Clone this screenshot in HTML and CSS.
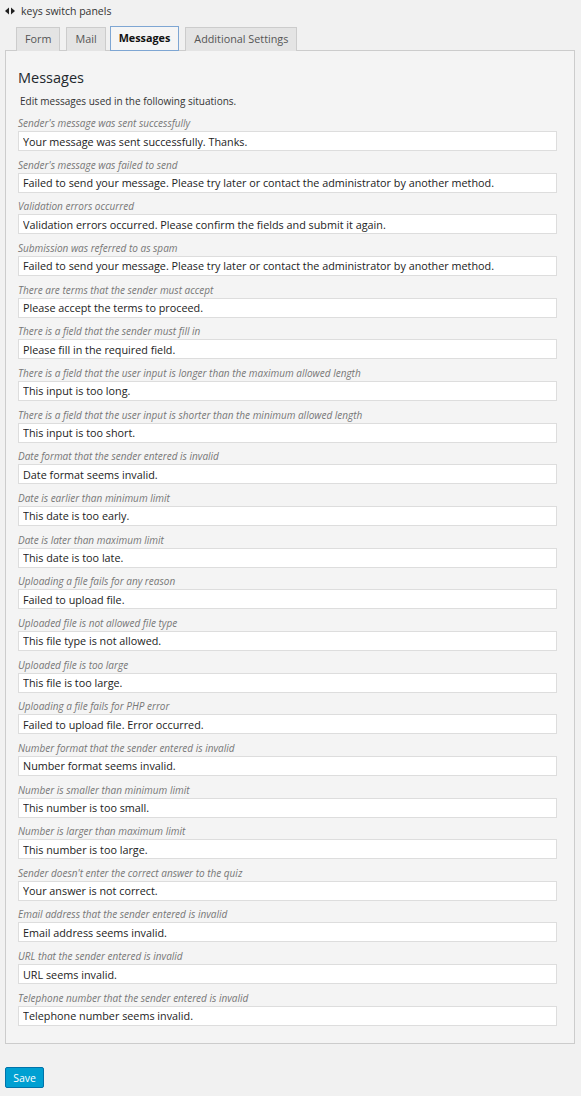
FILE: index.html
```html
<!DOCTYPE html>
<html lang="en">
<head>
  <meta charset="UTF-8">
  <title>Contact Form - Messages</title>
  <link rel="stylesheet" href="styles.css">
</head>
<body>

  <!-- Keyboard hint -->
  <p class="keys-hint">
    <svg class="keys-icon" width="10" height="8" viewBox="0 0 10 8"><polygon points="0,4 4,0.5 4,7.5" fill="#222"/><polygon points="10,4 6,0.5 6,7.5" fill="#222"/></svg>
    keys switch panels
  </p>

  <!-- Tabs -->
  <nav class="tabs">
    <a href="#form" class="tab">Form</a>
    <a href="#mail" class="tab">Mail</a>
    <a href="#messages" class="tab active">Messages</a>
    <a href="#additional" class="tab">Additional Settings</a>
  </nav>

  <!-- Messages panel -->
  <section class="panel" id="messages">
    <h2>Messages</h2>
    <p class="desc">Edit messages used in the following situations.</p>

    <label class="field"><span>Sender's message was sent successfully</span><input type="text" value="Your message was sent successfully. Thanks."></label>
    <label class="field"><span>Sender's message was failed to send</span><input type="text" value="Failed to send your message. Please try later or contact the administrator by another method."></label>
    <label class="field"><span>Validation errors occurred</span><input type="text" value="Validation errors occurred. Please confirm the fields and submit it again."></label>
    <label class="field"><span>Submission was referred to as spam</span><input type="text" value="Failed to send your message. Please try later or contact the administrator by another method."></label>
    <label class="field"><span>There are terms that the sender must accept</span><input type="text" value="Please accept the terms to proceed."></label>
    <label class="field"><span>There is a field that the sender must fill in</span><input type="text" value="Please fill in the required field."></label>
    <label class="field"><span>There is a field that the user input is longer than the maximum allowed length</span><input type="text" value="This input is too long."></label>
    <label class="field"><span>There is a field that the user input is shorter than the minimum allowed length</span><input type="text" value="This input is too short."></label>
    <label class="field"><span>Date format that the sender entered is invalid</span><input type="text" value="Date format seems invalid."></label>
    <label class="field"><span>Date is earlier than minimum limit</span><input type="text" value="This date is too early."></label>
    <label class="field"><span>Date is later than maximum limit</span><input type="text" value="This date is too late."></label>
    <label class="field"><span>Uploading a file fails for any reason</span><input type="text" value="Failed to upload file."></label>
    <label class="field"><span>Uploaded file is not allowed file type</span><input type="text" value="This file type is not allowed."></label>
    <label class="field"><span>Uploaded file is too large</span><input type="text" value="This file is too large."></label>
    <label class="field"><span>Uploading a file fails for PHP error</span><input type="text" value="Failed to upload file. Error occurred."></label>
    <label class="field"><span>Number format that the sender entered is invalid</span><input type="text" value="Number format seems invalid."></label>
    <label class="field"><span>Number is smaller than minimum limit</span><input type="text" value="This number is too small."></label>
    <label class="field"><span>Number is larger than maximum limit</span><input type="text" value="This number is too large."></label>
    <label class="field"><span>Sender doesn't enter the correct answer to the quiz</span><input type="text" value="Your answer is not correct."></label>
    <label class="field"><span>Email address that the sender entered is invalid</span><input type="text" value="Email address seems invalid."></label>
    <label class="field"><span>URL that the sender entered is invalid</span><input type="text" value="URL seems invalid."></label>
    <label class="field"><span>Telephone number that the sender entered is invalid</span><input type="text" value="Telephone number seems invalid."></label>
  </section>

  <button type="button" class="save">Save</button>

</body>
</html>
```

FILE: styles.css
```css
body {
  background-color: #f1f1f1;
  font-family: "Open Sans", Arial, sans-serif;
  color: #333;
  margin: 0;
  padding: 0 6px 0 5px;
}
.keys-hint {
  margin: 0;
  height: 22px;
  font-size: 10.5px;
  color: #333;
  display: flex;
  align-items: center;
  gap: 6px;
}
.tabs {
  display: flex;
  gap: 6px;
  padding-left: 11px;
  height: 23px;
  margin-top: 5px;
}
.tab {
  display: block;
  box-sizing: border-box;
  height: 24px;
  line-height: 22px;
  padding: 0 8px;
  font-size: 10.8px;
  color: #555;
  text-decoration: none;
  background-color: #e4e4e4;
  border: 1px solid #ccc;
  border-bottom: none;
}
.tab.active {
  background-color: #f5f5f5;
  color: #111;
  font-weight: bold;
  border: 1px solid #7ea6d3;
  height: 25px;
  margin-top: -1px;
  margin-left: -2px;
  position: relative;
}
.panel {
  background-color: #f4f4f4;
  border: 1px solid #ccc;
  padding: 15px 17px 12px 12px;
}
.panel h2 {
  margin: 0;
  font-size: 14.5px;
  font-weight: normal;
  color: #23282d;
  line-height: 24px;
}
.desc {
  margin: 3px 0 6px 2px;
  font-size: 10px;
  line-height: 16px;
  color: #333;
}
.field {
  display: block;
  margin-bottom: 5.67px;
}
.field span {
  display: block;
  font-size: 10px;
  font-style: italic;
  color: #777;
  line-height: 16px;
}
.field input {
  display: block;
  box-sizing: border-box;
  width: 100%;
  height: 20px;
  border: 1px solid #ddd;
  background-color: #fff;
  padding: 0 4px;
  font-family: "Open Sans", Arial, sans-serif;
  font-size: 10.8px;
  color: #222;
  outline: none;
}
.save {
  margin-top: 23px;
  background-color: #00a0d2;
  border: 1px solid #0073aa;
  border-radius: 2px;
  color: #fff;
  font-family: "Open Sans", Arial, sans-serif;
  font-size: 10.5px;
  height: 21px;
  width: 39px;
  padding: 0;
}
```
